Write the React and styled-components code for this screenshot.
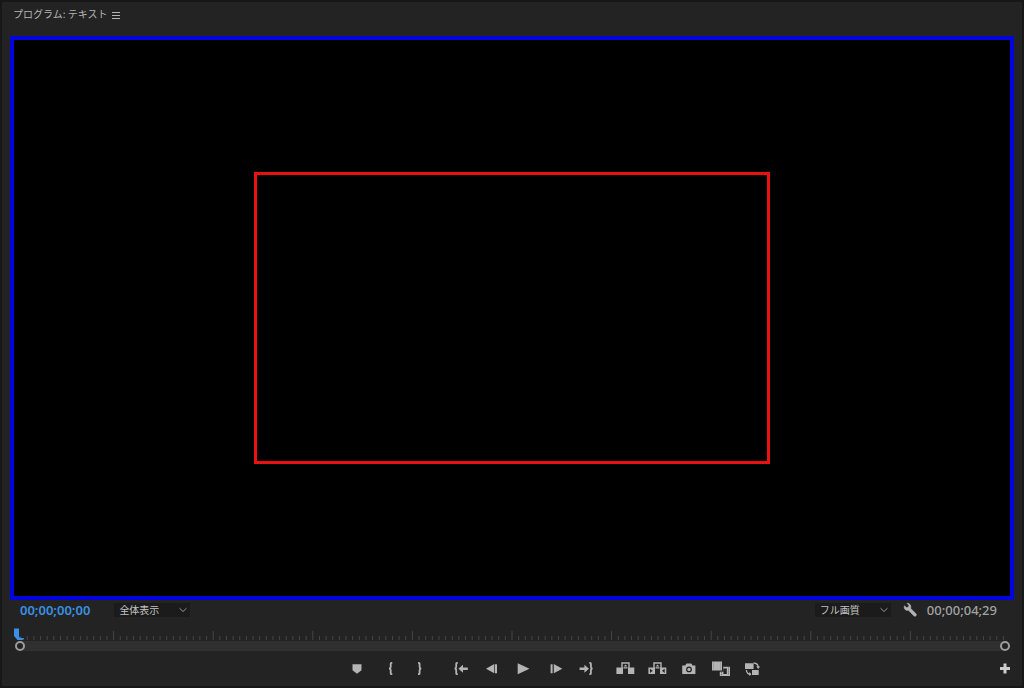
import React from "react";
import styled, { createGlobalStyle } from "styled-components";

const GlobalStyle = createGlobalStyle`
  * { box-sizing: border-box; }
  body {
    margin: 0;
    background: #171717;
    color: #b4b4b4;
    font-family: "Noto Sans CJK JP", sans-serif;
    font-size: 10px;
  }
`;

const Page = styled.main`
  min-height: 100vh;
  display: flex;
  padding: 2px;
`;

const Panel = styled.section`
  flex: 1;
  min-width: 0;
  padding: 0 8px 5px;
  background: #232323;
`;

const TitleBar = styled.header`
  display: flex;
  align-items: center;
  gap: 4px;
  height: 34px;
  padding: 0 3px 10px;
`;

const Title = styled.h1`
  margin: 0;
  font-size: 10px;
  font-weight: 400;
  line-height: 16px;
`;

const IconButton = styled.button`
  display: flex;
  flex: none;
  padding: 0;
  border: 0;
  background: none;
  color: ${(p) => p.$color || "#b4b4b4"};
  cursor: pointer;
`;

const Icon = styled.svg`
  display: block;
  fill: currentColor;
`;

const Monitor = styled.div`
  display: flex;
  align-items: center;
  justify-content: center;
  aspect-ratio: 251 / 141;
  border: 4px solid #0404de;
  background: #000;
`;

const Frame = styled.div`
  width: 51.8%;
  aspect-ratio: 516 / 292;
  border: 3px solid #ea1111;
`;

const InfoRow = styled.div`
  display: flex;
  align-items: center;
  height: 20px;
  padding: 0 17px 0 10px;
`;

const Timecode = styled.span`
  color: ${(p) => (p.$active ? "#3a8fe0" : "#a2a2a2")};
  font-family: "Noto Sans", sans-serif;
  font-size: 13px;
  font-weight: 600;
  line-height: 20px;
`;

const EndTime = styled(Timecode)`
  margin-left: 10px;
  font-weight: 500;
`;

const Picker = styled.label`
  display: grid;
  grid-template-columns: 1fr 12px;
  align-items: center;
  width: 76px;
`;

const ZoomPicker = styled(Picker)`
  margin-left: 24px;
`;

const QualityPicker = styled(Picker)`
  margin-left: auto;
  margin-right: 12px;
`;

const Select = styled.select`
  grid-area: 1 / 1 / 2 / 3;
  width: 100%;
  height: 14px;
  padding: 0 16px 0 5px;
  appearance: none;
  border: 0;
  background: #1b1b1b;
  color: #c4c4c4;
  font: 10px/14px "Noto Sans CJK JP", sans-serif;
`;

const Chevron = styled.svg`
  grid-area: 1 / 2;
  fill: none;
  stroke: #949494;
  pointer-events: none;
`;

const Timeline = styled.div`
  position: relative;
  padding: 8px 4px 0;
`;

const Ruler = styled.svg`
  display: block;
  width: 100%;
  height: 13px;
  stroke: #464646;
`;

const Playhead = styled.svg`
  position: absolute;
  left: 3px;
  top: 8px;
  fill: #3a8fe8;
`;

const ZoomBar = styled.div`
  display: flex;
  align-items: center;
  justify-content: space-between;
  height: 10px;
  margin-left: 1px;
  background: linear-gradient(#303030, #303030) center / calc(100% - 10px) 100% no-repeat;
`;

const Handle = styled.button`
  width: 10px;
  height: 10px;
  padding: 0;
  border: 2px solid #9c9c9c;
  border-radius: 50%;
  background: #232323;
`;

const Transport = styled.div`
  display: grid;
  grid-template-columns: 66fr auto 49fr;
  align-items: center;
  height: 24px;
  margin-top: 6px;
`;

const Groups = styled.div`
  grid-column: 2;
  display: flex;
  gap: 9px;
`;

const Group = styled.div`
  display: flex;
`;

const AddSlot = styled.div`
  display: flex;
  justify-content: flex-end;
`;

const braceLeft = (x) => (
  <path
    d={`M${x + 3.8} 5.8h-.8q-.8 0-.8 1v3.2q0 1.2-1.5 1.5 1.5.3 1.5 1.5v3.2q0 1 .8 1h.8`}
    fill="none"
    stroke="currentColor"
    strokeWidth="1.8"
  />
);
const braceRight = (x) => (
  <path
    d={`M${x} 5.8h.8q.8 0 .8 1v3.2q0 1.2 1.5 1.5-1.5.3-1.5 1.5v3.2q0 1-.8 1h-.8`}
    fill="none"
    stroke="currentColor"
    strokeWidth="1.8"
  />
);

const clipStand = (
  <>
    <path
      d="M13 11.5V6h7v5.5M14.5 10.9h4"
      fill="none"
      stroke="currentColor"
      strokeWidth="1.4"
    />
    <path d="M16.5 7.5l1.8 2h-3.6z" />
  </>
);

const groups = [
  {
    width: 32,
    items: [
      ["マーカーを追加", <path d="M12.5 7.2h9v6l-4.5 3.6-4.5-3.6z" />],
      ["インをマーク", braceLeft(16.5)],
      ["アウトをマーク", braceRight(14)],
    ],
  },
  {
    width: 31,
    items: [
      [
        "インへ移動",
        <>
          {braceLeft(9)}
          <path d="M13.4 11.7l4.6-4v2.7h4.8V13H18v2.7z" />
        </>,
      ],
      ["1 フレーム前へ戻る", <path d="M10 11.7l8.3-4.6v9.2zM19 7.2h2v9h-2z" />],
      ["再生", <path d="M10.7 6.2l11.8 5.5-11.8 5.5z" />],
      ["1 フレーム先へ進む", <path d="M12.6 7.2h2v9h-2zM15.8 7.1l8.5 4.6-8.5 4.6z" />],
      [
        "アウトへ移動",
        <>
          <path d="M20 11.7l-4.6-4v2.7h-4.8V13h4.8v2.7z" />
          {braceRight(20.3)}
        </>,
      ],
    ],
  },
  {
    width: 32,
    items: [
      [
        "リフト",
        <>
          {clipStand}
          <path d="M7.4 10.6H14V17H7.4zM19 10.6h6.3V17H19z" />
        </>,
      ],
      [
        "抽出",
        <>
          {clipStand}
          <path
            fillRule="evenodd"
            d="M7.4 10.6H14V17H7.4zM9 11.7v4.2l2.7-2.1zM19 10.6h6.3V17H19zM23.7 11.7v4.2L21 13.8z"
          />
        </>,
      ],
      [
        "フレームを書き出し",
        <>
          <path d="M9.2 8.4h3l1.3-1.8h4.8l1.3 1.8h2.8V17H9.2z" />
          <circle cx="16" cy="12.4" r="2.3" fill="none" stroke="#232323" strokeWidth="1.2" />
        </>,
      ],
      [
        "比較表示",
        <>
          <path d="M7 4.5h10v9H7z" />
          <path d="M8.5 4.5v9M15.5 4.5v9" stroke="#777" strokeWidth=".6" strokeDasharray="1 1" />
          <path
            fillRule="evenodd"
            d="M18.2 9.7H25V19H14.8v-4.3h3.4zM18.4 11.6v5.5h3.4v-5.5z"
          />
          <path d="M23.5 10.4v8M16.5 15.2v3.3" stroke="#555" strokeWidth=".8" strokeDasharray="1 1" />
        </>,
      ],
      [
        "プロキシの切り替え",
        <>
          <path d="M8 6.2h8.6V12H8zM15 13h6.7v5H15z" />
          <path
            d="M16.6 6q4.4.3 4.6 4.2M14 17.4q-4.3 0-4.6-4.4"
            fill="none"
            stroke="currentColor"
            strokeWidth="1.3"
          />
          <path d="M19.2 9.4h4l-2 2.7zM12.2 15v4l2.2-1.8z" />
        </>,
      ],
    ],
  },
];

const ticks = Array.from({ length: 149 }, (_, i) => i + 1);

function Dropdown({ as: Wrapper, label, value }) {
  return (
    <Wrapper>
      <Select aria-label={label} defaultValue={value}>
        <option>{value}</option>
      </Select>
      <Chevron width="10" height="6" viewBox="0 0 10 6" aria-hidden="true">
        <path d="M1.5 1.2L5 4.5l3.5-3.3" />
      </Chevron>
    </Wrapper>
  );
}

export default function App() {
  return (
    <Page>
      <GlobalStyle />
      <Panel>
        <TitleBar>
          <Title>プログラム: テキスト</Title>
          <IconButton aria-label="パネルメニュー">
            <Icon width="9" height="11" viewBox="0 0 9 11">
              <path d="M1 3h8v1H1zM1 6h8v1H1zM1 9h8v1H1z" />
            </Icon>
          </IconButton>
        </TitleBar>

        <Monitor>
          <Frame />
        </Monitor>

        <InfoRow>
          <Timecode $active>00;00;00;00</Timecode>
          <Dropdown as={ZoomPicker} label="ズームレベル" value="全体表示" />
          <Dropdown as={QualityPicker} label="再生時の解像度" value="フル画質" />
          <IconButton aria-label="設定">
            <Icon width="14" height="16" viewBox="0 0 14 16">
              <path
                d="M4 1.2L5.9 3.3 5.4 5.2 3.6 5.6 1.4 3.8Q.6 6.2 2.1 7.6 3.6 8.8 5.4 8.3L10.8 13.8q1.2 1 2.2 0 1-1.100 0-2.100L7.700 6.400Q8.300 4.100 7.100 2.600 5.900 1 4 1.200z"
                stroke="currentColor"
                strokeWidth=".5"
              />
            </Icon>
          </IconButton>
          <EndTime>00;00;04;29</EndTime>
        </InfoRow>

        <Timeline>
          <Ruler aria-hidden="true">
            {ticks.map((i) => (
              <line
                key={i}
                x1={`${(i / 150) * 100}%`}
                x2={`${(i / 150) * 100}%`}
                y1={i % 15 === 0 ? 3 : 8}
                y2="12"
              />
            ))}
          </Ruler>
          <Playhead width="12" height="13" viewBox="0 0 12 13" aria-hidden="true">
            <path d="M1 .5h5v8.300l1.500 1.200h3.300v1.500L8.500 12H4.500L1 8z" />
          </Playhead>
          <ZoomBar>
            <Handle aria-label="ズーム開始位置" />
            <Handle aria-label="ズーム終了位置" />
          </ZoomBar>
        </Timeline>

        <Transport>
          <Groups>
            {groups.map((group, index) => (
              <Group key={index}>
                {group.items.map(([label, drawing]) => (
                  <IconButton key={label} aria-label={label}>
                    <Icon width={group.width} height="24" viewBox={`0 0 ${group.width} 24`}>
                      {drawing}
                    </Icon>
                  </IconButton>
                ))}
              </Group>
            ))}
          </Groups>
          <AddSlot>
            <IconButton aria-label="ボタンエディター" $color="#cccccc">
              <Icon width="18" height="24" viewBox="0 0 18 24">
                <path d="M7.5 6.5h3V10H14v3h-3.500v3.500h-3V13H4v-3h3.500z" />
              </Icon>
            </IconButton>
          </AddSlot>
        </Transport>
      </Panel>
    </Page>
  );
}
